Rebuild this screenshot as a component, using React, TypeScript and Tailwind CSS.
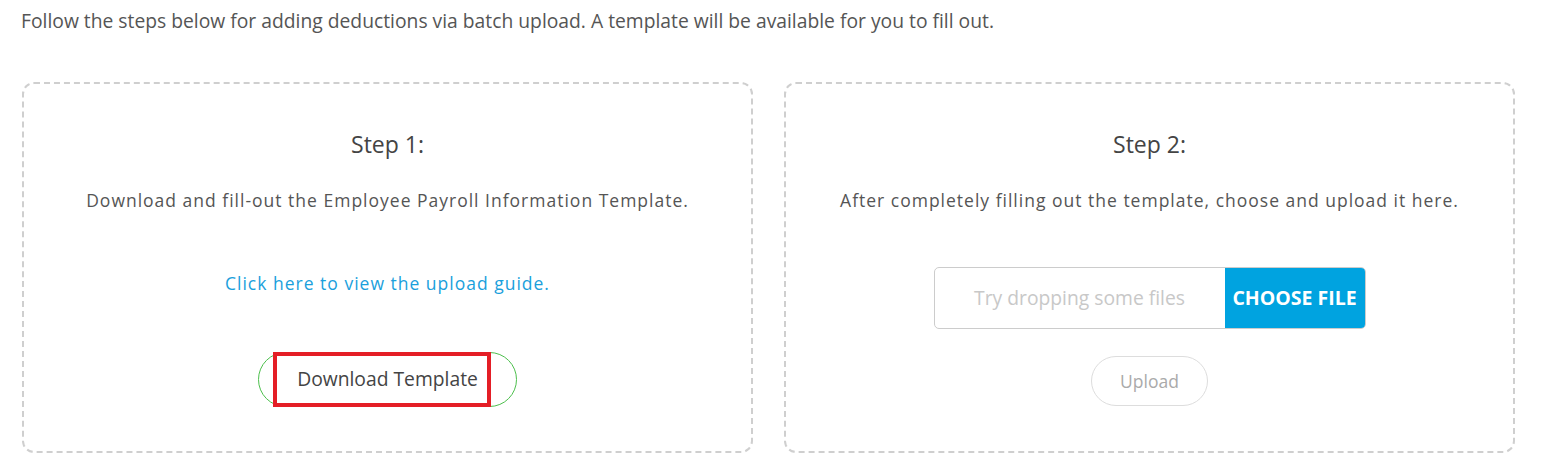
import React from "react";

export default function App() {
  return (
    <div className="w-[1545px] h-[465px] bg-white text-[#444] overflow-hidden" style={{ fontFamily: "'Open Sans', 'Noto Sans', sans-serif" }}>
      <p className="pl-[21px] pt-[9px] text-[19.3px] leading-[24px] text-[#555]">
        Follow the steps below for adding deductions via batch upload. A template will be available for you to fill out.
      </p>
      <div className="flex gap-[31px] pl-[22px] mt-[49px]">
        <div className="w-[731px] h-[371px] border-2 border-dashed border-[#cfcfcf] rounded-[12px] flex flex-col items-center">
          <h2 className="mt-[45px] text-[23px] leading-[30px] text-[#444]">Step 1:</h2>
          <p className="mt-[31px] text-[17.5px] leading-[20px] tracking-[1px] text-[#555]">
            Download and fill-out the Employee Payroll Information Template.
          </p>
          <a className="mt-[63px] text-[17.5px] leading-[20px] tracking-[1px] text-[#1aa0dc] cursor-pointer">
            Click here to view the upload guide.
          </a>
          <div className="mt-[59px] relative w-[259px] h-[55px] rounded-full border border-[#4cbf4c] flex items-center justify-center">
            <div className="absolute left-[14px] top-[-1px] w-[218px] h-[55px] border-[4px] border-[#e41e26]"></div>
            <span className="text-[19.3px] text-[#444] relative">Download Template</span>
          </div>
        </div>
        <div className="w-[731px] h-[371px] border-2 border-dashed border-[#cfcfcf] rounded-[12px] flex flex-col items-center">
          <h2 className="mt-[45px] text-[23px] leading-[30px] text-[#444]">Step 2:</h2>
          <p className="mt-[31px] text-[17.5px] leading-[20px] tracking-[1px] text-[#555]">
            After completely filling out the template, choose and upload it here.
          </p>
          <div className="mt-[57px] flex w-[432px] h-[62px] border border-[#ccc] rounded-[5px] overflow-hidden">
            <div className="flex-1 flex items-center justify-center text-[19.3px] text-[#c8c8c8]">Try dropping some files</div>
            <div className="w-[140px] bg-[#00a3e0] flex items-center justify-center text-white font-bold text-[19.5px]">CHOOSE FILE</div>
          </div>
          <div className="mt-[27px] w-[117px] h-[50px] rounded-full border border-[#ddd] flex items-center justify-center text-[17.5px] text-[#aaa]">
            Upload
          </div>
        </div>
      </div>
    </div>
  );
}
